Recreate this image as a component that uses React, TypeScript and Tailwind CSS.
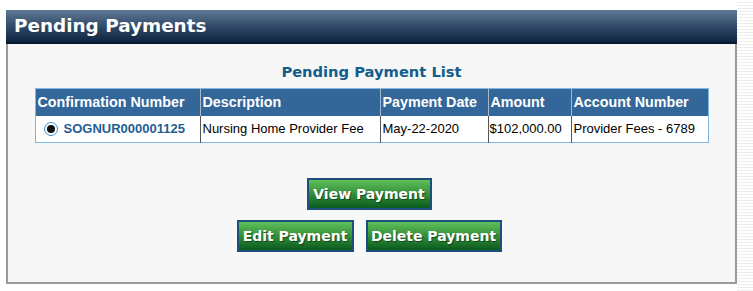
import React from "react";

const rows = [
  ["SOGNUR000001125", "Nursing Home Provider Fee", "May-22-2020", "$102,000.00", "Provider Fees - 6789"],
];

function Btn({ label, w }: { label: string; w: string }) {
  return (
    <button
      className={`h-[32px] ${w} border-2 border-[#1d4f7a] bg-[linear-gradient(#5fbf5a,#2f8a35_55%,#0b5a1f)] text-white font-bold text-[14px] [font-family:'DejaVu_Sans',Verdana,sans-serif] [text-shadow:1px_1px_1px_rgba(0,0,0,0.45)] flex items-center justify-center`}
    >
      {label}
    </button>
  );
}

export default function App() {
  return (
    <div className="w-[753px] h-[291px] bg-white flex overflow-hidden">
      <div className="w-[6px] shrink-0" />
      <div className="mt-[10px] w-[731px] h-[274px] shrink-0 border-2 border-[#9a9a9a] border-t-0 bg-[#f7f7f7] flex flex-col">
        <div className="h-[34px] -mx-[2px] bg-[linear-gradient(#5f7893,#2e4766_55%,#0f2440)] border-b-2 border-[#0a1a2e] flex items-center pl-[8px]">
          <span className="text-white font-bold text-[18.4px] [font-family:'DejaVu_Sans',Verdana,sans-serif] leading-none">
            Pending Payments
          </span>
        </div>
        <div className="flex flex-col items-center pt-[19px]">
          <div className="text-[#135d8c] font-bold text-[14.7px] [font-family:'DejaVu_Sans',Verdana,sans-serif] leading-[18px]">
            Pending Payment List
          </div>
          <table className="mt-[7px] border border-[#7fb8e0] border-collapse [font-family:'Liberation_Sans',Arial,sans-serif] text-[13px]">
            <thead>
              <tr className="bg-[#336699] text-white font-bold h-[27px] text-[14.3px]">
                <th className="w-[165px] text-left pl-[2px] border-r border-[#a8b8c8] font-bold">Confirmation Number</th>
                <th className="w-[180px] text-left pl-[2px] border-r border-[#a8b8c8] font-bold">Description</th>
                <th className="w-[108px] text-left pl-[2px] border-r border-[#a8b8c8] font-bold">Payment Date</th>
                <th className="w-[83px] text-left pl-[2px] border-r border-[#a8b8c8] font-bold">Amount</th>
                <th className="w-[137px] text-left pl-[2px] font-bold">Account Number</th>
              </tr>
            </thead>
            <tbody>
              {rows.map((r) => (
                <tr key={r[0]} className="bg-white h-[27px] text-black">
                  <td className="pl-[8px] border-r border-[#555]">
                    <div className="flex items-center gap-[6px]">
                      <span className="w-[14px] h-[14px] rounded-full border border-[#3a8fd0] bg-white flex items-center justify-center">
                        <span className="w-[8px] h-[8px] rounded-full bg-[#111]" />
                      </span>
                      <span className="text-[#1f5e94] font-bold">{r[0]}</span>
                    </div>
                  </td>
                  <td className="pl-[2px] border-r border-[#555]">{r[1]}</td>
                  <td className="pl-[2px] border-r border-[#555]">{r[2]}</td>
                  <td className="pl-[1px] border-r border-[#555]">{r[3]}</td>
                  <td className="pl-[2px]">{r[4]}</td>
                </tr>
              ))}
            </tbody>
          </table>
          <div className="mt-[35px] flex flex-col items-center gap-[10px] ml-[-5px]">
            <Btn label="View Payment" w="w-[125px]" />
            <div className="flex gap-[12px]">
              <Btn label="Edit Payment" w="w-[117px]" />
              <Btn label="Delete Payment" w="w-[136px]" />
            </div>
          </div>
        </div>
      </div>
      <div className="flex-1 bg-[repeating-linear-gradient(#ffffff_0px,#ffffff_2px,#eeeeee_2px,#eeeeee_3px)]" />
    </div>
  );
}
